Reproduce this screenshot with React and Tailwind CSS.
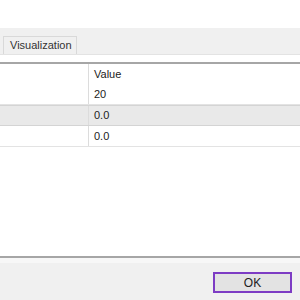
export default function App() {
  const rows = [
    { value: "20", shaded: false },
    { value: "0.0", shaded: true },
    { value: "0.0", shaded: false },
  ];

  return (
    <div className="w-[300px] h-[300px] bg-white flex flex-col overflow-hidden text-[11px] text-[#222] font-['Liberation_Sans',Arial,sans-serif]">
      {/* tab strip */}
      <div className="h-[28px] bg-white" />
      <div className="h-[27px] bg-[#f0f0f0] border-b border-[#e3e3e3] flex items-end pl-[3px]">
        <div className="h-[18px] pl-[6px] pr-[4px] flex items-center border border-b-0 border-[#d9d9d9] bg-[#f0f0f0] text-[#333]">
          Visualization
        </div>
      </div>
      <div className="h-[7px] bg-white" />
      <div className="h-[2px] bg-[#a6a6a6]" />

      {/* table */}
      <div className="flex-1 flex flex-col">
        <div className="h-[20px] flex">
          <div className="w-[89px] border-r border-[#dcdcdc]" />
          <div className="flex-1 flex items-center pl-[5px]">Value</div>
        </div>
        {rows.map((r, i) => (
          <div
            key={i}
            className={`h-[21px] flex border-b ${r.shaded ? "bg-[#e9e9e9] border-[#d4d4d4] border-t" : "border-[#e3e3e3]"}`}
          >
            <div className="w-[89px] border-r border-[#dcdcdc]" />
            <div className="flex-1 flex items-center pl-[5px]">{r.value}</div>
          </div>
        ))}
      </div>

      {/* footer */}
      <div className="h-[2px] bg-[#a6a6a6]" />
      <div className="h-[5px] bg-[#f7f7f7]" />
      <div className="h-[37px] bg-[#f0f0f0] flex items-start justify-end pr-[8px] pt-[9px]">
        <button className="w-[79px] h-[21px] border-2 border-[#7d3cc4] bg-[#e3e3e3] text-[#222] text-[12px] flex items-center justify-center">
          OK
        </button>
      </div>
    </div>
  );
}
